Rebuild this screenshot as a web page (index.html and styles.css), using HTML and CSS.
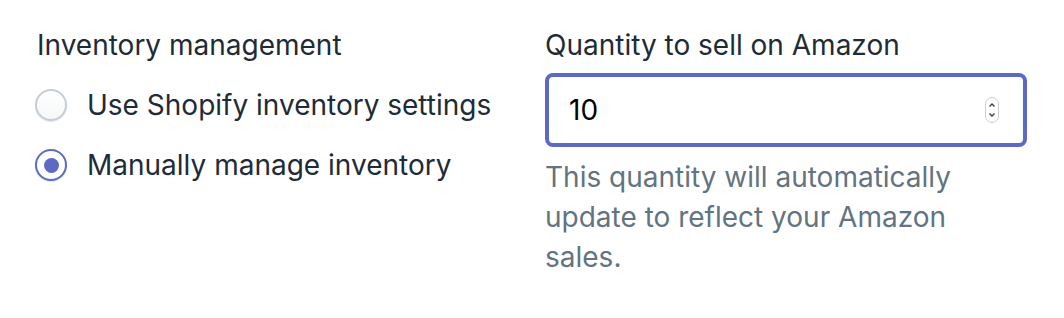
FILE: index.html
```html
<!DOCTYPE html>
<html lang="en">

<head>
    <meta charset="UTF-8">
    <meta name="viewport" content="width=device-width, initial-scale=1.0">
    <title>Inventory</title>
    <link rel="stylesheet" href="styles.css">
</head>

<body>
    <div class="settings">
        <div class="field">
            <div class="field-label">Inventory management</div>
            <ul class="choice-list">
                <li>
                    <label class="choice">
                        <span class="radio"></span>
                        <span>Use Shopify inventory settings</span>
                    </label>
                </li>
                <li>
                    <label class="choice">
                        <span class="radio checked"></span>
                        <span>Manually manage inventory</span>
                    </label>
                </li>
            </ul>
        </div>
        <div class="field">
            <div class="field-label">Quantity to sell on Amazon</div>
            <div class="text-input">
                <span class="input-value">10</span>
                <span class="spinner">
                    <svg width="14" height="26" viewBox="0 0 14 26">
                        <rect x="0.5" y="0.5" width="13" height="25" rx="6.5" fill="#fff" stroke="#c9cdd2" />
                        <path d="M4.5 9.5 L7 7 L9.5 9.5" fill="none" stroke="#3a3f45" stroke-width="1.4" />
                        <path d="M4.5 16.5 L7 19 L9.5 16.5" fill="none" stroke="#3a3f45" stroke-width="1.4" />
                    </svg>
                </span>
            </div>
            <p class="help-text">This quantity will automatically update to reflect your Amazon sales.</p>
        </div>
    </div>
</body>

</html>
```

FILE: styles.css
```css
* {
    margin: 0;
    padding: 0;
    box-sizing: border-box;
}

body {
    font-family: Inter, "Noto Sans", sans-serif;
    font-size: 28px;
    line-height: 40px;
    color: #212b36;
    background-color: #fff;
}

.settings {
    display: grid;
    grid-template-columns: 1fr 1fr;
    gap: 28px;
    padding: 25px 37px 0 35px;
}

.field-label {
    padding-left: 2px;
    margin-bottom: 20px;
}

.choice-list {
    list-style: none;
    display: flex;
    flex-direction: column;
    gap: 20px;
}

.choice {
    display: flex;
    align-items: center;
    gap: 20px;
    cursor: pointer;
}

.radio {
    width: 32px;
    height: 32px;
    border-radius: 50%;
    border: 2px solid #c4cdd5;
    background: linear-gradient(#fff, #f6f7f8);
    box-shadow: 0 1px 1px rgba(22, 29, 37, 0.12);
    display: flex;
    align-items: center;
    justify-content: center;
}

.radio.checked {
    border-color: #5c6ac4;
    background: #fff;
}

.radio.checked::after {
    content: "";
    width: 15px;
    height: 15px;
    border-radius: 50%;
    background-color: #5c6ac4;
}

.field:last-child .field-label {
    padding-left: 0;
    margin-bottom: 8px;
}

.text-input {
    height: 74px;
    border: 4px solid #5c6ac4;
    border-radius: 8px;
    display: flex;
    align-items: center;
    justify-content: space-between;
    padding: 0 24px 0 20px;
    color: #000;
}

.spinner {
    display: flex;
}

.help-text {
    margin-top: 10px;
    padding-right: 20px;
    color: #637381;
}
```
